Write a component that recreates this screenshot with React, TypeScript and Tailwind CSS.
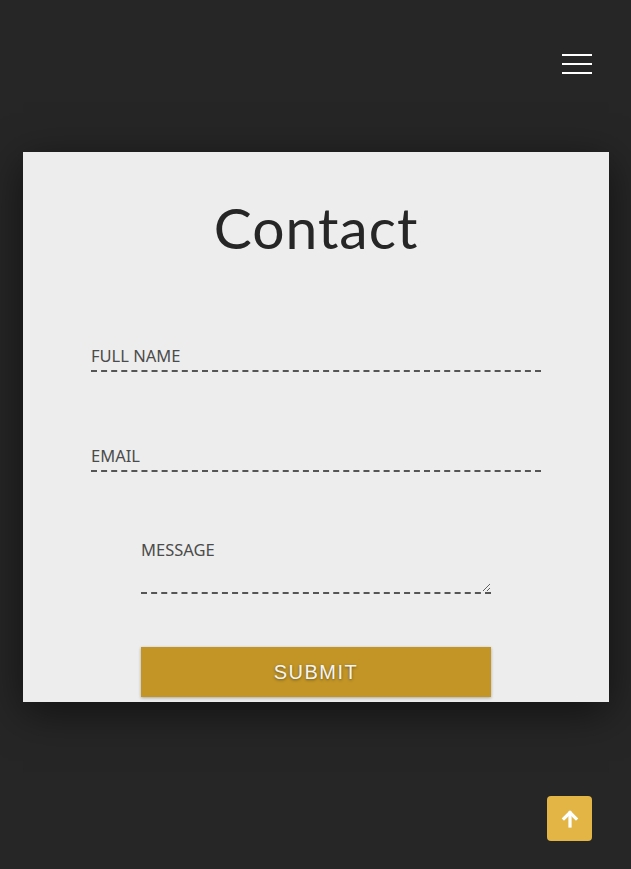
import React from "react";

export default function App() {
  return (
    <div className="min-h-[869px] w-full bg-[#262626] relative" style={{ fontFamily: "'Open Sans', sans-serif" }}>
      <div className="flex justify-end pt-[54px] pr-[39px] h-[152px]">
        <div className="flex flex-col gap-[7px] w-[30px]">
          <div className="h-[2px] bg-white" />
          <div className="h-[2px] bg-white" />
          <div className="h-[2px] bg-white" />
        </div>
      </div>
      <div className="mx-[23px] w-[586px] h-[550px] bg-[#ededed] shadow-[0_10px_40px_rgba(0,0,0,0.55)] flex flex-col items-center">
        <h1 className="mt-[35px] text-[57px] leading-[80px] text-[#262626] font-['Lato',sans-serif] tracking-[1px]">Contact</h1>
        <div className="mt-[79px] w-[450px] flex flex-col">
          <div className="text-[16.5px] leading-[20px] text-[#4b4b4b] font-['Noto_Sans',sans-serif]">FULL NAME</div>
          <div className="mt-[4px] border-b-2 border-dashed border-[#555]" />
          <div className="mt-[74px] text-[16.5px] leading-[20px] text-[#4b4b4b] font-['Noto_Sans',sans-serif]">EMAIL</div>
          <div className="mt-[4px] border-b-2 border-dashed border-[#555]" />
        </div>
        <div className="mt-[68px] w-[350px] flex flex-col">
          <div className="text-[16.5px] leading-[20px] text-[#4b4b4b] font-['Noto_Sans',sans-serif]">MESSAGE</div>
          <textarea className="mt-[4px] h-[30px] w-full resize-y bg-transparent outline-none border-b-2 border-dashed border-[#555]" />
          <button className="mt-[53px] h-[50px] w-full bg-[#c29526] text-[#f4f4f4] text-[20px] tracking-[1.5px] font-['Liberation_Sans',sans-serif] shadow-[0_1px_3px_rgba(0,0,0,0.3)] [text-shadow:0_1px_3px_rgba(0,0,0,0.45)]">
            SUBMIT
          </button>
        </div>
      </div>
      <div className="absolute left-[547px] top-[796px] w-[45px] h-[45px] rounded-[4px] bg-[#e3b545] flex items-center justify-center">
        <svg width="20" height="20" viewBox="0 0 20 20" fill="none" stroke="white" strokeWidth="3.2" strokeLinecap="square">
          <path d="M10 17V4" />
          <path d="M4 9.5L10 3.5L16 9.5" />
        </svg>
      </div>
    </div>
  );
}
